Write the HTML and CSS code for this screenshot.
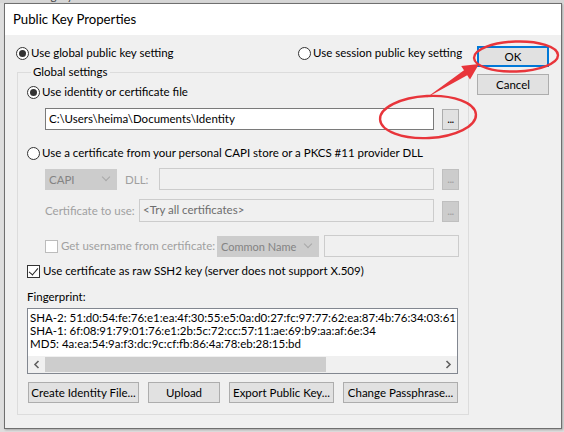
FILE: index.html
```html
<!DOCTYPE html>
<html lang="en">
<head>
	<meta charset="UTF-8">
	<title>Public Key Properties</title>
	<link rel="stylesheet" href="styles.css">
</head>
<body>
	<div class="parent-strip">
		<div class="parent-box"><span>Category</span></div>
	</div>
	<div class="dialog">
		<div class="titlebar">Public Key Properties</div>
		<div class="client">
			<div class="main">
				<div class="top-row">
					<label class="radio checked"><span class="mark"></span>Use global public key setting</label>
					<label class="radio"><span class="mark"></span>Use session public key setting</label>
				</div>
				<fieldset class="group">
					<legend>Global settings</legend>
					<label class="radio checked row-identity"><span class="mark"></span>Use identity or certificate file</label>
					<div class="field-row row-file">
						<div class="textbox file-path">C:\Users\heima\Documents\Identity</div>
						<div class="dots">...</div>
					</div>
					<label class="radio row-capi"><span class="mark"></span>Use a certificate from your personal CAPI store or a PKCS #11 provider DLL</label>
					<div class="field-row row-dll">
						<div class="combo disabled capi"><span class="combo-text">CAPI</span><span class="chev"></span></div>
						<span class="label disabled dll-label">DLL:</span>
						<div class="textbox disabled dll"></div>
						<div class="dots disabled">...</div>
					</div>
					<div class="field-row row-cert">
						<span class="label disabled">Certificate to use:</span>
						<div class="textbox disabled cert">&lt;Try all certificates&gt;</div>
						<div class="dots disabled">...</div>
					</div>
					<div class="field-row row-user">
						<label class="check disabled"><span class="box"></span>Get username from certificate:</label>
						<div class="combo disabled common"><span class="combo-text">Common Name</span><span class="chev"></span></div>
						<div class="textbox disabled user"></div>
					</div>
					<label class="check checked row-raw"><span class="box"></span>Use certificate as raw SSH2 key (server does not support X.509)</label>
					<div class="label row-fp">Fingerprint:</div>
					<div class="fingerprint">
						<div class="fp-lines">
							<div>SHA-2: 51:d0:54:fe:76:e1:ea:4f:30:55:e5:0a:d0:27:fc:97:77:62:ea:87:4b:76:34:03:61</div>
							<div>SHA-1: 6f:08:91:79:01:76:e1:2b:5c:72:cc:57:11:ae:69:b9:aa:af:6e:34</div>
							<div>MD5: 4a:ea:54:9a:f3:dc:9c:cf:fb:86:4a:78:eb:28:15:bd</div>
						</div>
						<div class="hscroll">
							<div class="arrow"><svg width="7" height="9" viewBox="0 0 7 9"><path d="M5.5 1 L2 4.5 L5.5 8" fill="none" stroke="#606060" stroke-width="1.6"/></svg></div>
							<div class="thumb"></div>
							<div class="track"></div>
							<div class="arrow"><svg width="7" height="9" viewBox="0 0 7 9"><path d="M1.5 1 L5 4.5 L1.5 8" fill="none" stroke="#606060" stroke-width="1.6"/></svg></div>
						</div>
					</div>
					<div class="button-row">
						<div class="btn create">Create Identity File...</div>
						<div class="btn upload">Upload</div>
						<div class="btn export">Export Public Key...</div>
						<div class="btn change">Change Passphrase...</div>
					</div>
				</fieldset>
			</div>
			<div class="side">
				<div class="btn default">OK</div>
				<div class="btn">Cancel</div>
			</div>
		</div>
	</div>
	<svg class="marks" width="564" height="432" viewBox="0 0 564 432">
		<ellipse cx="516" cy="56.5" rx="42" ry="15" fill="none" stroke="#e8353b" stroke-width="2.4" transform="rotate(-2 516 56)"/>
		<ellipse cx="428" cy="117" rx="48" ry="21" fill="none" stroke="#e8353b" stroke-width="2.4" transform="rotate(-3 428 117)"/>
		<polygon points="426,98 464,70.3 461.2,66.1 479,64 470,79.5 467.2,75.3" fill="#e8353b"/>
	</svg>
</body>
</html>
```
FILE: styles.css
```css
*{
	box-sizing: border-box;
}
body{
	margin: 0;
	width: 564px;
	height: 432px;
	overflow: hidden;
	background: #dedede;
	font-family: Lato, "Noto Sans", sans-serif;
	font-size: 11.5px;
	color: #000;
	position: relative;
}
.parent-strip{
	height: 3px;
	background: #d6d6d6;
	padding-left: 24px;
	overflow: hidden;
}
.parent-box{
	width: 530px;
	height: 3px;
	background: #fff;
	border-left: 1px solid #a0a0a0;
	padding-left: 2px;
}
.parent-box span{
	display: block;
	margin-top: -10px;
	line-height: 12px;
	color: #444;
}
.dialog{
	margin-left: 4px;
	width: 558px;
	height: 426px;
	border: 1px solid #6f6f6f;
	background: #f0f0f0;
	box-shadow: 1px 1px 2px rgba(0,0,0,0.25);
	display: flex;
	flex-direction: column;
}
.titlebar{
	height: 31px;
	background: #fff;
	padding-left: 8px;
	font-size: 13.2px;
	line-height: 31px;
	color: #000;
}
.client{
	flex: 1;
	display: flex;
	padding-left: 11px;
}
.main{
	width: 452px;
	padding-top: 10px;
}
.top-row{
	display: grid;
	grid-template-columns: 282px auto;
	height: 16px;
}
.radio, .check{
	display: flex;
	align-items: center;
	height: 16px;
	line-height: 16px;
	white-space: nowrap;
}
.radio .mark{
	width: 13px;
	height: 13px;
	border: 1px solid #333;
	border-radius: 50%;
	background: #fff;
	margin-right: 2px;
	display: flex;
	align-items: center;
	justify-content: center;
}
.radio.checked .mark::after{
	content: "";
	width: 7px;
	height: 7px;
	border-radius: 50%;
	background: #333;
}
.check .box{
	width: 13px;
	height: 13px;
	border: 1px solid #333;
	background: #fff;
	margin-right: 3px;
	position: relative;
}
.check.checked .box::after{
	content: "";
	position: absolute;
	left: 3px;
	top: 0px;
	width: 4px;
	height: 8px;
	border-right: 1.5px solid #222;
	border-bottom: 1.5px solid #222;
	transform: rotate(40deg);
}
.check.disabled .box{
	border-color: #bcbcbc;
}
.disabled{
	color: #a0a0a0;
}
.group{
	margin: 3px 0 0 1px;
	width: 451px;
	height: 351px;
	border: 1px solid #dcdcdc;
	padding: 0 9px;
}
.group legend{
	padding: 0 2px;
	margin-left: 4px;
	line-height: 16px;
}
.row-identity{
	margin-top: 4px;
}
.field-row{
	display: flex;
	align-items: center;
}
.textbox{
	height: 22px;
	border: 1px solid #7a7a7a;
	background: #fff;
	padding-left: 3px;
	line-height: 20px;
	white-space: nowrap;
	overflow: hidden;
}
.textbox.disabled{
	border-color: #cccccc;
	background: #f0f0f0;
	color: #6d6d6d;
}
.row-file{
	margin: 7px 0 0 18px;
	height: 23px;
}
.file-path{
	width: 389px;
}
.dots{
	width: 17px;
	height: 21px;
	margin-left: 8px;
	margin-top: 1px;
	border: 1px solid #adadad;
	background: #e1e1e1;
	text-align: center;
	line-height: 17px;
	letter-spacing: -0.5px;
}
.dots.disabled{
	background: #cccccc;
	border-color: #bfbfbf;
	color: #a0a0a0;
}
.row-capi{
	margin-top: 15px;
}
.row-dll{
	margin: 7px 0 0 18px;
	height: 22px;
}
.combo{
	height: 21px;
	background: #cccccc;
	border: 1px solid #cccccc;
	color: #838383;
	padding-left: 3px;
	line-height: 19px;
	display: flex;
	align-items: center;
	white-space: nowrap;
}
.combo-text{
	flex: 1;
}
.chev{
	flex: none;
	width: 6px;
	height: 6px;
	border-right: 1px solid #a8a8a8;
	border-bottom: 1px solid #a8a8a8;
	transform: rotate(45deg);
	margin: 0 7px 4px 2px;
}
.capi{
	width: 72px;
}
.dll-label{
	margin: 0 0 0 8px;
	width: 34px;
}
.dll{
	width: 275px;
}
.row-cert{
	margin: 9px 0 0 18px;
	height: 23px;
}
.row-cert .label{
	width: 94px;
}
.cert{
	width: 295px;
	height: 23px;
}
.row-user{
	margin: 13px 0 0 18px;
	height: 22px;
}
.row-user .check{
	width: 172px;
}
.common{
	width: 102px;
	height: 21px;
	padding-left: 3px;
	font-size: 11px;
}
.user{
	width: 135px;
	margin-left: 5px;
}
.row-raw{
	margin-top: 6px;
}
.row-fp{
	margin-top: 10px;
	line-height: 16px;
}
.fingerprint{
	margin-top: 3px;
	width: 431px;
	height: 66px;
	border: 1px solid #828790;
	background: #fff;
	display: flex;
	flex-direction: column;
	justify-content: space-between;
	overflow: hidden;
}
.fp-lines{
	padding: 2px 0 0 2px;
	line-height: 13px;
	white-space: nowrap;
}
.hscroll{
	height: 17px;
	background: #f0f0f0;
	display: flex;
}
.arrow{
	width: 17px;
	display: flex;
	align-items: center;
	justify-content: center;
}
.thumb{
	width: 281px;
	margin: 1px 0;
	background: #cdcdcd;
}
.track{
	flex: 1;
}
.button-row{
	margin-top: 8px;
	display: flex;
	gap: 9px;
	padding-left: 1px;
}
.btn{
	height: 21px;
	border: 1px solid #adadad;
	background: #e1e1e1;
	text-align: center;
	line-height: 19px;
	white-space: nowrap;
}
.create{ width: 111px; }
.upload{ width: 72px; }
.export{ width: 105px; }
.change{ width: 115px; }
.side{
	padding: 11px 0 0 9px;
	display: flex;
	flex-direction: column;
	gap: 7px;
}
.side .btn{
	width: 72px;
}
.side .default{
	border: 2px solid #0078d7;
	line-height: 17px;
}
.marks{
	position: absolute;
	left: 0;
	top: 0;
	pointer-events: none;
}
```
